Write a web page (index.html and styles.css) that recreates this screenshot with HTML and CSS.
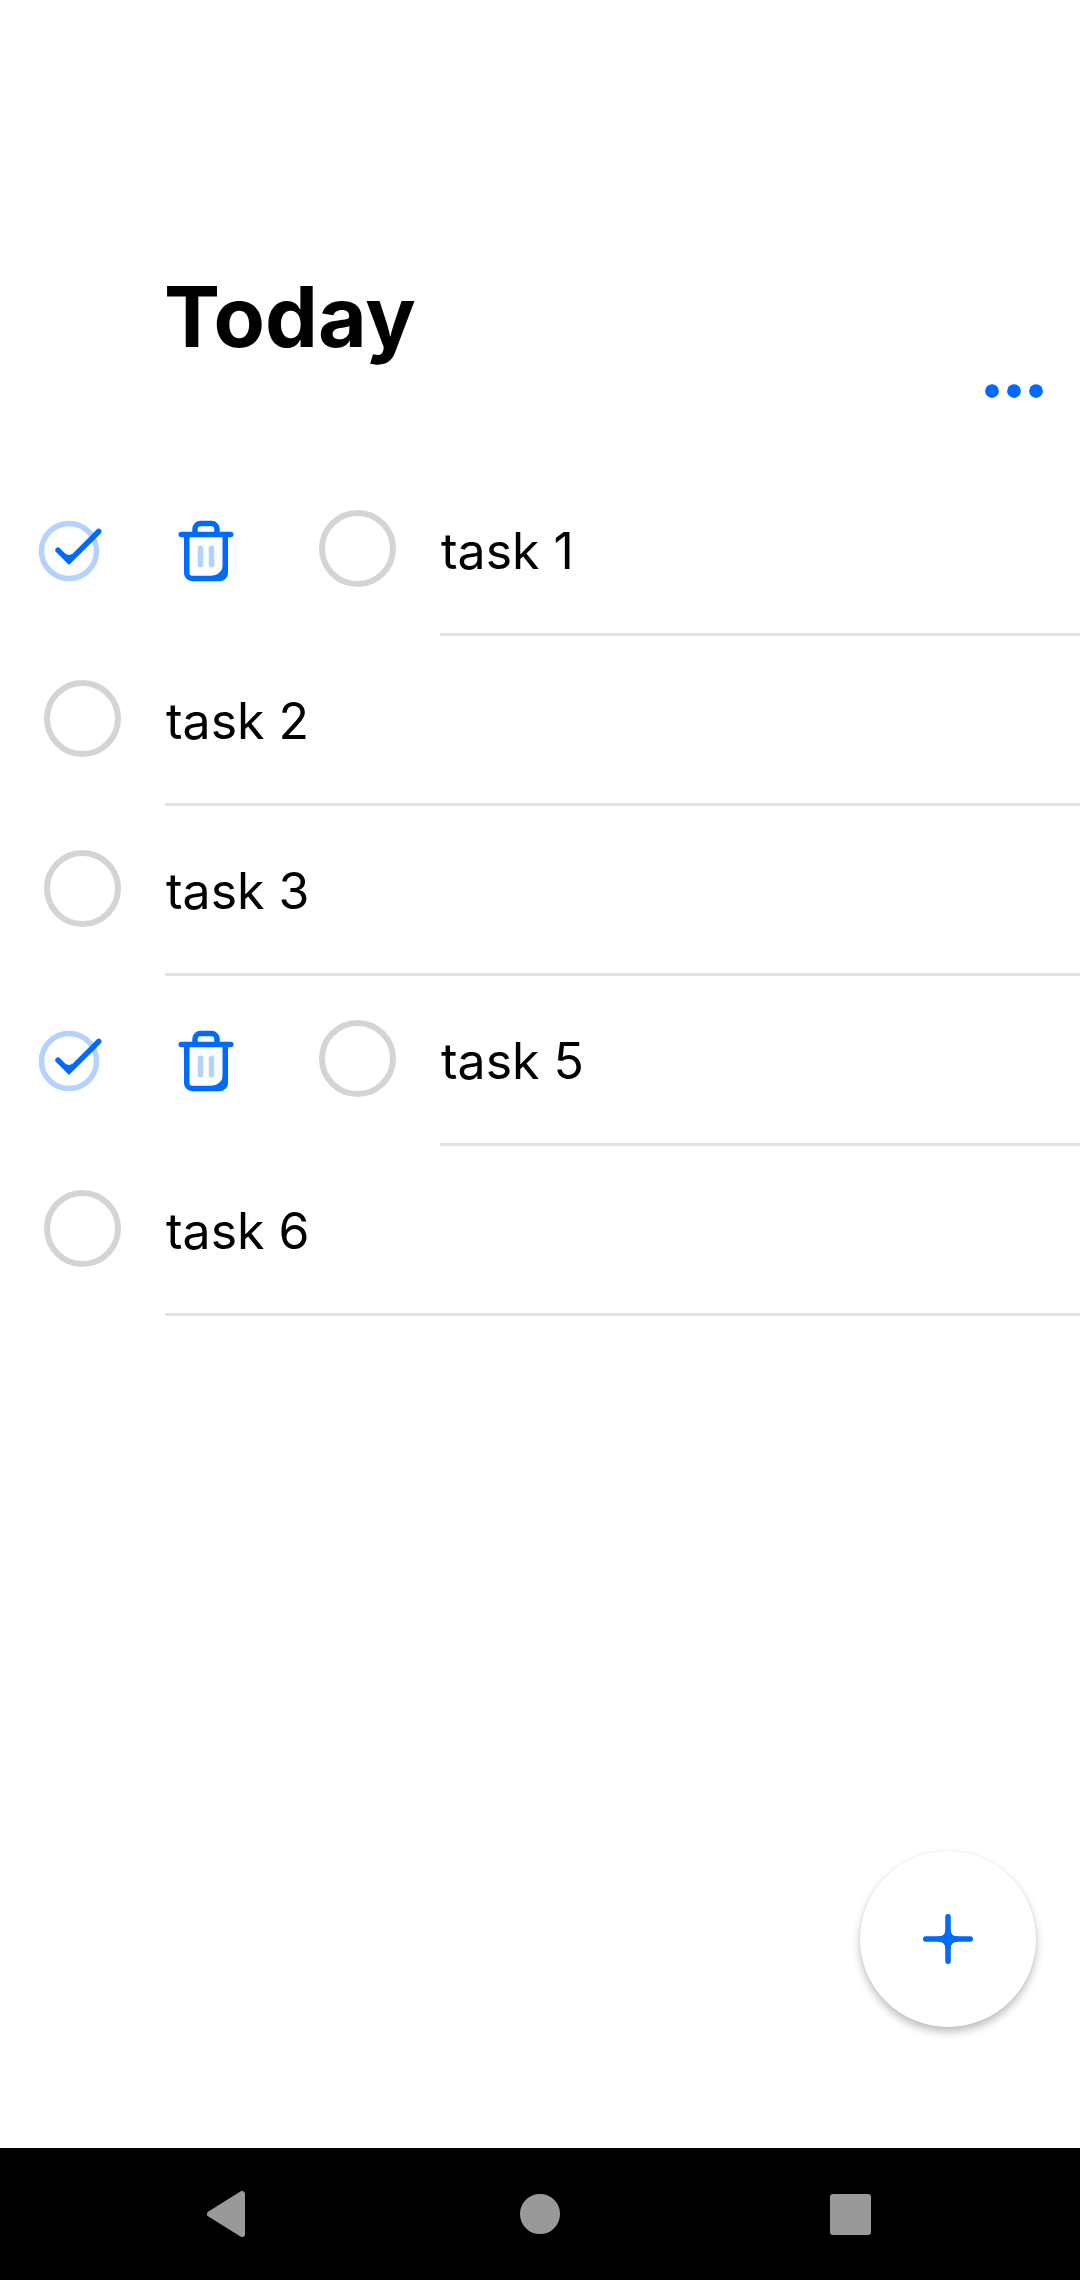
FILE: index.html
```html
<!DOCTYPE html>
<html lang="en">
<head>
<meta charset="utf-8">
<meta name="viewport" content="width=device-width, initial-scale=1">
<title>Today</title>
<link rel="stylesheet" href="styles.css">
</head>
<body>
<svg class="sprite" aria-hidden="true">
  <symbol id="icon-done" viewBox="0 0 24 24">
    <circle class="soft-line" cx="12" cy="12" r="10"/>
    <path class="line" d="M8 11.7l4 4L22.800 4.900"/>
    <path class="solid" d="M11 12.900q1 1.100 2 0v2l-1 .8-1-.8z"/>
  </symbol>
  <symbol id="icon-trash" viewBox="0 0 24 24">
    <path class="soft-line" d="M10 11v6M14 11v6"/>
    <path class="line" d="M3 6h18M5 6v14a2 2 0 0 0 2 2h10a2 2 0 0 0 2-2V6M8 6V4a2 2 0 0 1 2-2h4a2 2 0 0 1 2 2v2"/>
    <path class="solid" d="M18.2 16.8a4.2 4.2 0 0 1-4.2 4.2v.5h3l1.5-1.5z"/>
  </symbol>
</svg>
<div class="screen">
  <header class="header">
    <h1 class="title">Today</h1>
    <button class="icon-button menu" type="button" aria-label="More options">
      <svg class="icon" viewBox="0 0 24 24"><g class="solid"><circle cx="4" cy="12" r="2.5"/><circle cx="12" cy="12" r="2.5"/><circle cx="20" cy="12" r="2.5"/></g></svg>
    </button>
  </header>
  <main class="content">
    <ul class="tasks">
      <li class="task">
        <div class="actions">
          <button class="icon-button" type="button" aria-label="Complete task 1"><svg class="icon"><use href="#icon-done"/></svg></button>
          <button class="icon-button" type="button" aria-label="Delete task 1"><svg class="icon"><use href="#icon-trash"/></svg></button>
        </div>
        <input class="check" type="checkbox" id="task-1"><label class="name" for="task-1">task 1</label>
      </li>
      <li class="task"><input class="check" type="checkbox" id="task-2"><label class="name" for="task-2">task 2</label></li>
      <li class="task"><input class="check" type="checkbox" id="task-3"><label class="name" for="task-3">task 3</label></li>
      <li class="task">
        <div class="actions">
          <button class="icon-button" type="button" aria-label="Complete task 5"><svg class="icon"><use href="#icon-done"/></svg></button>
          <button class="icon-button" type="button" aria-label="Delete task 5"><svg class="icon"><use href="#icon-trash"/></svg></button>
        </div>
        <input class="check" type="checkbox" id="task-5"><label class="name" for="task-5">task 5</label>
      </li>
      <li class="task"><input class="check" type="checkbox" id="task-6"><label class="name" for="task-6">task 6</label></li>
    </ul>
  </main>
  <button class="add" type="button" aria-label="Add task">
    <svg class="icon" viewBox="0 0 24 24"><path class="line" d="M12 3.9v16.2M3.9 12h16.2"/><path class="solid" d="M11 8.5q0 2.5-2.5 2.5v2q2.5 0 2.5 2.5h2q0-2.5 2.5-2.5v-2q-2.5 0-2.5-2.5z"/></svg>
  </button>
  <nav class="system-bar" aria-label="System">
    <button class="icon-button" type="button" aria-label="Back"><svg class="icon key" viewBox="0 0 66 66"><path d="M13 33L45 13v40z"/></svg></button>
    <button class="icon-button" type="button" aria-label="Home"><svg class="icon key" viewBox="0 0 66 66"><circle cx="33" cy="33" r="17"/></svg></button>
    <button class="icon-button" type="button" aria-label="Recent apps"><svg class="icon key" viewBox="0 0 66 66"><rect x="16" y="16" width="35" height="35"/></svg></button>
  </nav>
</div>
</body>
</html>
```
FILE: styles.css
```css
:root {
  --accent: #006aff;
  --accent-soft: #b3d2ff;
  --ring: #d3d4d5;
  --divider: #e3e3e3;
}

* {
  box-sizing: border-box;
}

body {
  margin: 0;
  background: #fff;
  color: #000;
  font-family: Inter, "Liberation Sans", sans-serif;
}

.sprite {
  position: absolute;
  width: 0;
  height: 0;
}

.screen {
  display: flex;
  flex-direction: column;
  min-height: 100vh;
}

.header {
  display: flex;
  justify-content: space-between;
  align-items: flex-end;
  padding: 264px 33px 42px 164px;
}

.title {
  margin: 0;
  align-self: flex-start;
  font-size: 84px;
  line-height: 106px;
  font-weight: 700;
}

.menu {
  margin-top: 94px;
}

.icon-button {
  display: flex;
  padding: 0;
  border: 0;
  background: none;
}

.icon {
  display: block;
  width: 66px;
  height: 66px;
}

.line,
.soft-line {
  fill: none;
  stroke: var(--accent);
  stroke-width: 2;
  stroke-linecap: round;
}

.soft-line {
  stroke: var(--accent-soft);
}

.solid {
  fill: var(--accent);
}

.content {
  flex: 1;
}

.tasks {
  margin: 0;
  padding: 0;
  list-style: none;
}

.task {
  display: flex;
  height: 170px;
}

.actions {
  display: flex;
  align-items: center;
  gap: 71px;
  padding-left: 36px;
}

.check {
  appearance: none;
  flex: none;
  width: 77px;
  height: 77px;
  margin: 44px 44px 0;
  border: 6px solid var(--ring);
  border-radius: 50%;
}

.actions + .check {
  margin-left: 80px;
}

.name {
  flex: 1;
  padding: 4px 0 0 1px;
  border-bottom: 3px solid var(--divider);
  font-size: 50px;
  line-height: 163px;
}

.add {
  display: flex;
  align-self: flex-end;
  align-items: center;
  justify-content: center;
  width: 176px;
  height: 176px;
  margin: 44px 44px 121px;
  padding: 0;
  border: 0;
  border-radius: 50%;
  background: #fff;
  box-shadow: 0 5px 9px rgba(0, 0, 0, 0.25), 0 0 2px rgba(0, 0, 0, 0.08);
}

.system-bar {
  display: grid;
  grid-template-columns: repeat(3, 1fr);
  justify-items: center;
  align-items: center;
  height: 132px;
  padding: 0 7%;
  background: #000;
}

.key {
  fill: #999;
  stroke: #999;
  stroke-width: 6;
  stroke-linejoin: round;
}
```
